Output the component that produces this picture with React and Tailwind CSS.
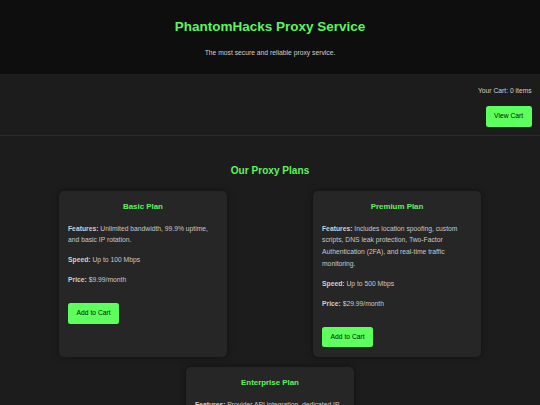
import React from "react";

const plans = [
  {
    name: "Basic Plan",
    features: "Unlimited bandwidth, 99.9% uptime, and basic IP rotation.",
    speed: "Up to 100 Mbps",
    price: "$9.99/month",
  },
  {
    name: "Premium Plan",
    features:
      "Includes location spoofing, custom scripts, DNS leak protection, Two-Factor Authentication (2FA), and real-time traffic monitoring.",
    speed: "Up to 500 Mbps",
    price: "$29.99/month",
  },
  {
    name: "Enterprise Plan",
    features:
      "Provider API integration, dedicated IP addresses, priority support, and unlimited concurrent connections.",
    speed: "Up to 1 Gbps",
    price: "$99.99/month",
  },
];

function Card({ plan }) {
  return (
    <div className="w-[168px] mx-[21.5px] bg-[#262626] rounded-[5px] px-[9px] pt-[10px] pb-[10px] shadow-[0_0_6px_rgba(0,0,0,0.45)] flex flex-col items-start">
      <h3 className="self-stretch text-[7.9px] leading-[12.6px] font-bold text-[#5cf55c] text-center">
        {plan.name}
      </h3>
      <p className="mt-[9px] text-[6.75px] leading-[11.8px] text-[#c8c8c8]">
        <b className="font-bold text-[#d0d0d0]">Features:</b> {plan.features}
      </p>
      <p className="mt-[8px] text-[6.75px] leading-[11.8px] text-[#c8c8c8]">
        <b className="font-bold text-[#d0d0d0]">Speed:</b> {plan.speed}
      </p>
      <p className="mt-[8px] text-[6.75px] leading-[11.8px] text-[#c8c8c8]">
        <b className="font-bold text-[#d0d0d0]">Price:</b> {plan.price}
      </p>
      <button className="mt-[17.5px] block h-[20.5px] px-[8.5px] bg-[#5cff5c] text-[#111] text-[6.75px] rounded-[2.5px] leading-none">
        Add to Cart
      </button>
    </div>
  );
}

export default function App() {
  return (
    <div
      className="w-[540px] h-[405px] overflow-hidden bg-[#1c1c1c]"
      style={{ fontFamily: '"Liberation Sans", Arial, sans-serif' }}
    >
      <header className="bg-[#0e0e0e] h-[74px] pt-[18.7px] flex flex-col items-center">
        <h1 className="text-[13.5px] leading-[16px] font-bold text-[#5cf55c]">
          PhantomHacks Proxy Service
        </h1>
        <p className="mt-[12.5px] text-[6.75px] leading-[11px] text-[#cfcfcf]">
          The most secure and reliable proxy service.
        </p>
      </header>
      <div className="h-[62px] border-b border-[#2c2c2c] pt-[10.8px] pr-[8.3px] flex flex-col items-end">
        <div className="text-[6.75px] leading-[11px] text-[#cfcfcf]">
          Your Cart: 0 items
        </div>
        <button className="mt-[10px] block h-[21px] px-[8.5px] bg-[#5cff5c] text-[#111] text-[6.75px] rounded-[2.5px] leading-none">
          View Cart
        </button>
      </div>
      <main className="pt-[28px]">
        <h2 className="text-[10.1px] leading-[13px] font-bold text-[#5cf55c] text-center">
          Our Proxy Plans
        </h2>
        <div className="mt-[14px] px-[16px] flex flex-wrap justify-around gap-y-[10px]">
          {plans.map((p) => (
            <Card key={p.name} plan={p} />
          ))}
        </div>
      </main>
    </div>
  );
}
